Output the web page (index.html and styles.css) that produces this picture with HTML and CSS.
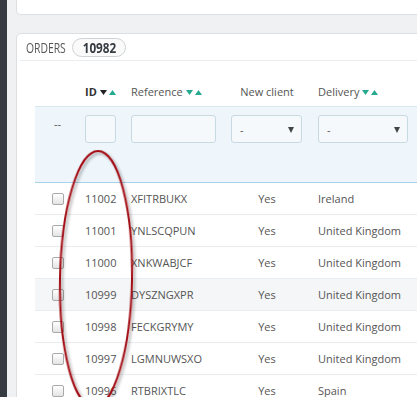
FILE: index.html
```html
<!DOCTYPE html>
<html lang="en">
<head>
<meta charset="utf-8">
<title>Orders</title>
<link rel="stylesheet" href="styles.css">
</head>
<body>
<div class="layout">
  <aside class="sidebar"></aside>
  <main class="main">
    <div class="card card-top"></div>
    <section class="card orders">
      <header class="orders-head">
        <span class="title">ORDERS</span>
        <span class="badge"><span class="badge-num">10982</span></span>
      </header>
      <table class="grid">
        <colgroup>
          <col class="c1"><col class="c2"><col class="c3"><col class="c4"><col class="c5">
        </colgroup>
        <thead>
          <tr class="head-row">
            <th></th>
            <th class="th-id">ID <span class="sort"><svg width="7" height="5" viewBox="0 0 7 5"><path d="M0 0H7L3.5 5Z" fill="#222"/></svg><svg width="7" height="5" viewBox="0 0 7 5"><path d="M0 5H7L3.5 0Z" fill="#25a991"/></svg></span></th>
            <th class="th-ref">Reference <span class="sort"><svg width="7" height="5" viewBox="0 0 7 5"><path d="M0 0H7L3.5 5Z" fill="#25a991"/></svg><svg width="7" height="5" viewBox="0 0 7 5"><path d="M0 5H7L3.5 0Z" fill="#25a991"/></svg></span></th>
            <th class="th-center">New client</th>
            <th class="th-del">Delivery <span class="sort"><svg width="7" height="5" viewBox="0 0 7 5"><path d="M0 0H7L3.5 5Z" fill="#25a991"/></svg><svg width="7" height="5" viewBox="0 0 7 5"><path d="M0 5H7L3.5 0Z" fill="#25a991"/></svg></span></th>
          </tr>
          <tr class="filter-row">
            <td class="dash">--</td>
            <td><span class="field f-id"></span></td>
            <td class="pl6"><span class="field f-ref"></span></td>
            <td><span class="field select s-new">-<i class="caret"></i></span></td>
            <td><span class="field select s-del">-<i class="caret"></i></span></td>
          </tr>
        </thead>
        <tbody>
          <tr><td class="chk"><span class="box"></span></td><td>11002</td><td class="pl6">XFITRBUKX</td><td class="center">Yes</td><td>Ireland</td></tr>
          <tr><td class="chk"><span class="box"></span></td><td>11001</td><td class="pl6">YNLSCQPUN</td><td class="center">Yes</td><td>United Kingdom</td></tr>
          <tr><td class="chk"><span class="box"></span></td><td>11000</td><td class="pl6">XNKWABJCF</td><td class="center">Yes</td><td>United Kingdom</td></tr>
          <tr class="hover"><td class="chk"><span class="box"></span></td><td>10999</td><td class="pl6">DYSZNGXPR</td><td class="center">Yes</td><td>United Kingdom</td></tr>
          <tr><td class="chk"><span class="box"></span></td><td>10998</td><td class="pl6">FECKGRYMY</td><td class="center">Yes</td><td>United Kingdom</td></tr>
          <tr><td class="chk"><span class="box"></span></td><td>10997</td><td class="pl6">LGMNUWSXO</td><td class="center">Yes</td><td>United Kingdom</td></tr>
          <tr><td class="chk"><span class="box"></span></td><td>10996</td><td class="pl6">RTBRIXTLC</td><td class="center">Yes</td><td>Spain</td></tr>
        </tbody>
      </table>
    </section>
  </main>
</div>
<svg class="annot" width="417" height="397" viewBox="0 0 417 397">
  <defs>
    <filter id="sh" x="-30%" y="-10%" width="160%" height="130%">
      <feDropShadow dx="2" dy="2" stdDeviation="1.6" flood-color="#000" flood-opacity="0.35"/>
    </filter>
  </defs>
  <ellipse cx="96" cy="279" rx="36" ry="128" transform="rotate(1 96 279)" fill="none" stroke="#a30f16" stroke-width="2" filter="url(#sh)"/>
</svg>
</body>
</html>
```

FILE: styles.css
```css
html, body {
  margin: 0;
  padding: 0;
  overflow: hidden;
}
body {
  width: 417px;
  height: 397px;
  background: #eff1f2;
  font-family: "Open Sans", "DejaVu Sans", sans-serif;
  font-size: 11px;
  color: #555;
  position: relative;
}
.layout {
  display: flex;
  height: 397px;
}
.sidebar {
  flex: 0 0 7px;
  background: #363a41;
}
.main {
  flex: 0 0 auto;
  padding-left: 9px;
  width: 520px;
}
.card {
  background: #fff;
  border: 1px solid #dcdfe1;
  border-radius: 5px;
}
.card-top {
  height: 14px;
  border-top: none;
  border-radius: 0 0 5px 5px;
}
.orders {
  margin-top: 18px;
  height: 600px;
}
.orders-head {
  height: 26px;
  margin-left: 3px;
  padding-left: 6px;
  border-bottom: 1px solid #eaedef;
  display: flex;
  align-items: center;
}
.title {
  display: inline-block;
  font-size: 14px;
  color: #555;
  transform: scaleX(0.74);
  transform-origin: left center;
  width: 46px;
}
.badge {
  width: 52px;
  height: 17px;
  border: 1px solid #d0d3d5;
  border-radius: 10px;
  background: #fafafa;
  display: flex;
  align-items: center;
  justify-content: center;
}
.badge-num {
  display: inline-block;
  font-size: 15px;
  font-weight: 700;
  color: #363a41;
  transform: scaleX(0.78);
}
.grid {
  margin-left: 18px;
  border-collapse: collapse;
  table-layout: fixed;
  width: 387px;
}
.c1 { width: 45px; }
.c2 { width: 45px; }
.c3 { width: 101px; }
.c4 { width: 87px; }
.c5 { width: 109px; }
.grid th, .grid td {
  padding: 0 0 0 5px;
  text-align: left;
  white-space: nowrap;
  overflow: hidden;
}
.head-row th {
  height: 38px;
  vertical-align: bottom;
  padding-bottom: 7px;
  font-weight: 400;
  color: #555;
}
.th-id {
  font-weight: 700 !important;
  color: #333 !important;
}
.th-ref { padding-left: 6px !important; }
.th-center {
  text-align: center !important;
  padding-right: 10px !important;
}
.sort {
  display: inline-flex;
  gap: 2px;
  vertical-align: 1px;
}
.sort svg { display: block; }
.filter-row td {
  height: 66px;
  background: #eef6fb;
  border-top: 1px solid #d9e7ef;
  border-bottom: 1px solid #a9d3ea;
  vertical-align: top;
  padding-top: 8px;
}
.grid td.dash {
  text-align: center;
  padding-left: 0;
  padding-top: 9px;
  height: 66px;
  color: #555;
}
.field {
  display: flex;
  align-items: center;
  box-sizing: border-box;
  height: 28px;
  background: #f5f9fb;
  border: 1px solid #c8d9e2;
  border-radius: 3px;
}
.f-id { width: 31px; }
.f-ref { width: 85px; }
.select {
  position: relative;
  padding-left: 8px;
  color: #555;
}
.s-new { width: 71px; }
.s-del { width: 90px; }
.caret {
  position: absolute;
  right: 7px;
  top: 11px;
  width: 0;
  height: 0;
  border-left: 3px solid transparent;
  border-right: 3px solid transparent;
  border-top: 6px solid #444;
}
tbody td {
  height: 31px;
  border-bottom: 1px solid #eaedef;
  color: #555;
}
tbody tr.hover td { background: #f4f6f7; }
.grid td.pl6 { padding-left: 6px; }
.grid td.center {
  text-align: center;
  padding-right: 10px;
}
.grid td.chk {
  text-align: center;
  padding-left: 0;
}
.box {
  display: inline-block;
  width: 10px;
  height: 10px;
  border: 1px solid #a9a9a9;
  border-radius: 2px;
  background: linear-gradient(#ffffff, #e4e4e4);
  vertical-align: -2px;
}
.annot {
  position: absolute;
  left: 0;
  top: 0;
  pointer-events: none;
}
```
